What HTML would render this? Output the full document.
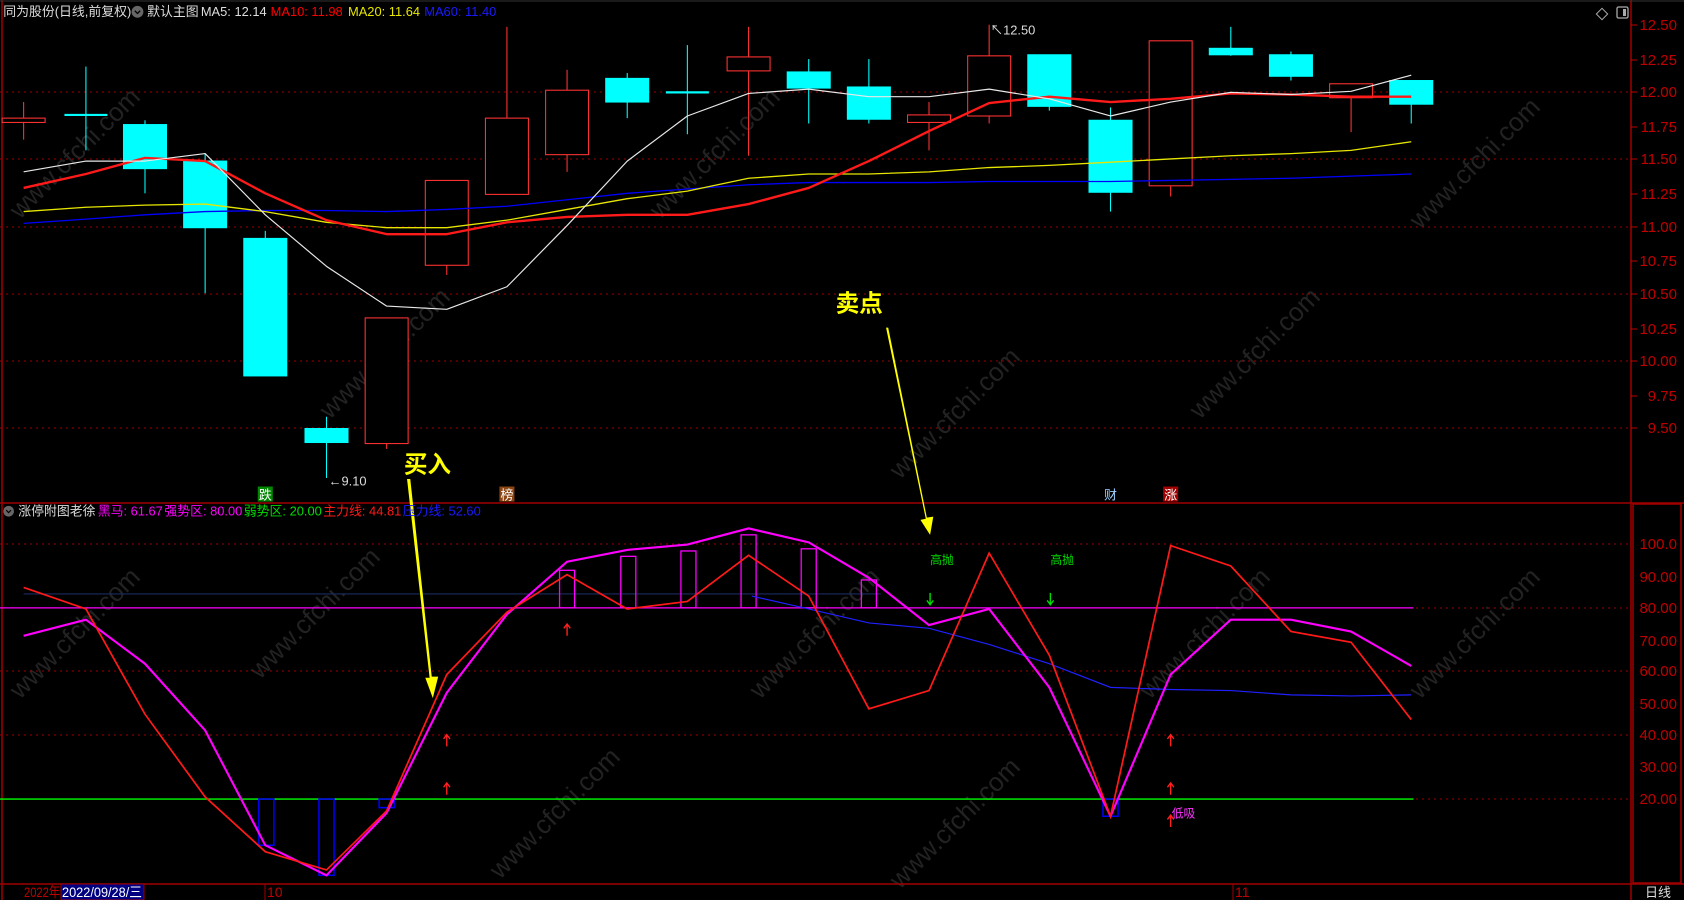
<!DOCTYPE html>
<html><head><meta charset="utf-8"><style>
html,body{margin:0;padding:0;background:#000;overflow:hidden}
svg{display:block}
text{font-family:"Liberation Sans","Noto Sans CJK SC",sans-serif}
</style></head><body>
<svg width="1684" height="900" viewBox="0 0 1684 900" xmlns="http://www.w3.org/2000/svg">
<rect width="1684" height="900" fill="#000"/>
<!-- watermarks -->
<g fill="#222" font-size="26" font-family="Liberation Sans">
<text transform="translate(20,220) rotate(-45)">www.cfchi.com</text>
<text transform="translate(330,420) rotate(-45)">www.cfchi.com</text>
<text transform="translate(660,220) rotate(-45)">www.cfchi.com</text>
<text transform="translate(900,480) rotate(-45)">www.cfchi.com</text>
<text transform="translate(1200,420) rotate(-45)">www.cfchi.com</text>
<text transform="translate(1420,230) rotate(-45)">www.cfchi.com</text>
<text transform="translate(20,700) rotate(-45)">www.cfchi.com</text>
<text transform="translate(260,680) rotate(-45)">www.cfchi.com</text>
<text transform="translate(500,880) rotate(-45)">www.cfchi.com</text>
<text transform="translate(760,700) rotate(-45)">www.cfchi.com</text>
<text transform="translate(900,890) rotate(-45)">www.cfchi.com</text>
<text transform="translate(1150,700) rotate(-45)">www.cfchi.com</text>
<text transform="translate(1420,700) rotate(-45)">www.cfchi.com</text>
</g>
<!-- grid dotted -->
<g stroke="#a00000" stroke-width="1" stroke-dasharray="2,4">
<line x1="0" y1="92" x2="1630" y2="92"/><line x1="0" y1="159" x2="1630" y2="159"/>
<line x1="0" y1="227" x2="1630" y2="227"/><line x1="0" y1="294" x2="1630" y2="294"/>
<line x1="0" y1="361" x2="1630" y2="361"/><line x1="0" y1="428" x2="1630" y2="428"/>
<line x1="0" y1="544" x2="1630" y2="544"/><line x1="0" y1="608" x2="1630" y2="608"/>
<line x1="0" y1="671" x2="1630" y2="671"/><line x1="0" y1="735" x2="1630" y2="735"/>
<line x1="0" y1="799" x2="1630" y2="799"/>
</g>
<!-- frame -->
<g stroke="#a00000" stroke-width="1.5" fill="none">
<line x1="1631" y1="0" x2="1631" y2="900"/>
<line x1="0" y1="503" x2="1684" y2="503"/>
<line x1="0" y1="884" x2="1684" y2="884"/>
<rect x="1633" y="504" width="48" height="379"/>
<line x1="2" y1="0" x2="2" y2="900"/>
</g>
<line x1="0" y1="1" x2="1684" y2="1" stroke="#333" stroke-width="1"/>
<!-- axis ticks/labels -->
<g fill="#c00000" font-size="15" text-anchor="end">
<text x="1677" y="30">12.50</text><text x="1677" y="65">12.25</text><text x="1677" y="97">12.00</text>
<text x="1677" y="132">11.75</text><text x="1677" y="164">11.50</text><text x="1677" y="199">11.25</text>
<text x="1677" y="232">11.00</text><text x="1677" y="266">10.75</text><text x="1677" y="299">10.50</text>
<text x="1677" y="334">10.25</text><text x="1677" y="366">10.00</text><text x="1677" y="401">9.75</text>
<text x="1677" y="433">9.50</text>
<text x="1677" y="549">100.0</text><text x="1677" y="582">90.00</text><text x="1677" y="613">80.00</text>
<text x="1677" y="646">70.00</text><text x="1677" y="676">60.00</text><text x="1677" y="709">50.00</text>
<text x="1677" y="740">40.00</text><text x="1677" y="772">30.00</text><text x="1677" y="804">20.00</text>
</g>
<g stroke="#c00000" stroke-width="1">
<line x1="1631" y1="25" x2="1637" y2="25"/><line x1="1631" y1="60" x2="1637" y2="60"/><line x1="1631" y1="92" x2="1637" y2="92"/>
<line x1="1631" y1="127" x2="1637" y2="127"/><line x1="1631" y1="159" x2="1637" y2="159"/><line x1="1631" y1="194" x2="1637" y2="194"/>
<line x1="1631" y1="227" x2="1637" y2="227"/><line x1="1631" y1="261" x2="1637" y2="261"/><line x1="1631" y1="294" x2="1637" y2="294"/>
<line x1="1631" y1="329" x2="1637" y2="329"/><line x1="1631" y1="361" x2="1637" y2="361"/><line x1="1631" y1="396" x2="1637" y2="396"/>
<line x1="1631" y1="428" x2="1637" y2="428"/>
</g>
<!-- icons top right -->
<rect x="1598" y="10" width="8" height="8" fill="none" stroke="#aaa" transform="rotate(45 1602 14)"/>
<rect x="1617" y="7" width="11" height="11" rx="1.5" fill="none" stroke="#aaa" stroke-width="1.3"/><rect x="1623" y="9" width="3" height="7" fill="#aaa"/>

<!-- main chart in visual coords -->
<g transform="scale(1.074)">
<g stroke-width="1">
<g stroke="#ff3232" fill="#000">
<line x1="22" y1="95" x2="22" y2="130"/><rect x="2" y="110" width="40" height="4"/>
<line x1="360" y1="296" x2="360" y2="418"/><rect x="340" y="296" width="40" height="117"/>
<line x1="416" y1="168" x2="416" y2="256"/><rect x="396" y="168" width="40" height="79"/>
<line x1="472" y1="25" x2="472" y2="181"/><rect x="452" y="110" width="40" height="71"/>
<line x1="528" y1="65" x2="528" y2="160"/><rect x="508" y="84" width="40" height="60"/>
<line x1="697" y1="25" x2="697" y2="145"/><rect x="677" y="53" width="40" height="13"/>
<line x1="865" y1="95" x2="865" y2="140"/><rect x="845" y="107" width="40" height="7"/>
<line x1="921" y1="23" x2="921" y2="115"/><rect x="901" y="52" width="40" height="56"/>
<line x1="1090" y1="38" x2="1090" y2="183"/><rect x="1070" y="38" width="40" height="135"/>
<line x1="1258" y1="78" x2="1258" y2="123"/><rect x="1238" y="78" width="40" height="13"/>
</g>
<g stroke="#00ffff" fill="#00ffff">
<line x1="80" y1="62" x2="80" y2="140"/><line x1="60" y1="107" x2="100" y2="107" stroke-width="2"/>
<line x1="135" y1="112" x2="135" y2="180"/><rect x="115" y="116" width="40" height="41"/>
<line x1="191" y1="143" x2="191" y2="273"/><rect x="171" y="150" width="40" height="62"/>
<line x1="247" y1="215" x2="247" y2="350"/><rect x="227" y="222" width="40" height="128"/>
<line x1="304" y1="388" x2="304" y2="445"/><rect x="284" y="399" width="40" height="13"/>
<line x1="584" y1="68" x2="584" y2="110"/><rect x="564" y="73" width="40" height="22"/>
<line x1="640" y1="42" x2="640" y2="125"/><line x1="620" y1="86" x2="660" y2="86" stroke-width="2"/>
<line x1="753" y1="55" x2="753" y2="115"/><rect x="733" y="67" width="40" height="15"/>
<line x1="809" y1="55" x2="809" y2="115"/><rect x="789" y="81" width="40" height="30"/>
<line x1="977" y1="51" x2="977" y2="103"/><rect x="957" y="51" width="40" height="48"/>
<line x1="1034" y1="100" x2="1034" y2="197"/><rect x="1014" y="112" width="40" height="67"/>
<line x1="1146" y1="25" x2="1146" y2="52"/><rect x="1126" y="45" width="40" height="6"/>
<line x1="1202" y1="48" x2="1202" y2="75"/><rect x="1182" y="51" width="40" height="20"/>
<line x1="1314" y1="75" x2="1314" y2="115"/><rect x="1294" y="75" width="40" height="22"/>
</g>
</g>
<g fill="none" stroke-linejoin="round">
<polyline stroke="#0000ff" stroke-width="1.2" points="22,208 80,204 135,200 191,197 247,196 304,196 360,197 416,195 472,192 528,186 584,180 640,176 697,172 753,170 809,170 865,170 921,169 977,169 1034,169 1090,168 1146,167 1202,166 1258,164 1314,162"/>
<polyline stroke="#e6e600" stroke-width="1.2" points="22,197 80,193 135,191 191,190 247,197 304,207 360,212 416,212 472,205 528,195 584,185 640,178 697,166 753,162 809,162 865,160 921,156 977,154 1034,151 1090,148 1146,145 1202,143 1258,140 1314,132"/>
<polyline stroke="#ff1a1a" stroke-width="2.2" points="22,175 80,162 135,147 191,150 247,180 304,205 360,218 416,218 472,207 528,202 584,200 640,200 697,190 753,175 809,150 865,122 921,96 977,90 1034,95 1090,92 1146,87 1202,88 1258,90 1314,90"/>
<polyline stroke="#e8e8e8" stroke-width="1.1" points="22,160 80,150 135,150 191,143 247,200 304,248 360,285 416,288 472,267 528,210 584,150 640,108 697,87 753,83 809,90 865,90 921,83 977,92 1034,108 1090,95 1146,86 1202,88 1258,85 1314,70"/>
</g>
<text x="306" y="452" fill="#ddd" font-size="12">←9.10</text>
<text x="922" y="32" fill="#ddd" font-size="12">↖12.50</text>
<rect x="240" y="453" width="14" height="14" fill="#008800"/><text x="241" y="465" fill="#fff" font-size="12">跌</text>
<rect x="465" y="453" width="14" height="14" fill="#8b4513"/><text x="466" y="465" fill="#fff" font-size="12">榜</text>
<text x="1028" y="465" fill="#9fd0ff" font-size="12">财</text>
<rect x="1083" y="453" width="14" height="14" fill="#a00000"/><text x="1084" y="465" fill="#fff" font-size="12">涨</text>

<line x1="22" y1="553" x2="820" y2="553" stroke="#1a2a60" stroke-width="1"/>
<line x1="0" y1="566" x2="1316" y2="566" stroke="#ff00ff" stroke-width="1.2"/>
<line x1="0" y1="744" x2="1316" y2="744" stroke="#00ff00" stroke-width="1.2"/>
<g fill="none" stroke="#ff00ff" stroke-width="1.2">
<rect x="521" y="531" width="14" height="35"/><rect x="578" y="518" width="14" height="48"/>
<rect x="634" y="513" width="14" height="53"/><rect x="690" y="498" width="14" height="68"/>
<rect x="746" y="511" width="14" height="55"/><rect x="802" y="540" width="14" height="26"/>
</g>
<g fill="none" stroke="#0000ff" stroke-width="1.4">
<rect x="241" y="744" width="14" height="43"/><rect x="297" y="744" width="14" height="71"/>
<rect x="353" y="744" width="14" height="8"/><rect x="1027" y="744" width="14" height="16"/>
</g>
<polyline fill="none" stroke="#2020ff" stroke-width="1.1" points="700,555 753,567 809,580 865,585 921,600 977,618 1034,640 1090,642 1146,643 1202,647 1258,648 1314,647"/>
<polyline fill="none" stroke="#ff00ff" stroke-width="2" points="22,592 80,577 135,618 191,680 247,787 304,815 360,757 416,645 472,572 528,523 584,512 640,507 697,492 753,505 809,538 865,582 921,567 977,640 1034,760 1090,628 1146,577 1202,577 1258,588 1314,620"/>
<polyline fill="none" stroke="#ff1a1a" stroke-width="1.6" points="22,547 80,567 135,665 191,742 247,793 304,810 360,755 416,628 472,570 528,535 584,567 640,560 697,517 753,555 809,660 865,643 921,515 977,610 1034,760 1090,508 1146,527 1202,588 1258,598 1314,670"/>
<g stroke="#ff2020" stroke-width="1.3" fill="none">
<path d="M528,592 V582 M525,585 L528,581 L531,585"/>
<path d="M416,695 V685 M413,688 L416,684 L419,688"/>
<path d="M416,740 V730 M413,733 L416,729 L419,733"/>
<path d="M1090,695 V685 M1087,688 L1090,684 L1093,688"/>
<path d="M1090,740 V730 M1087,733 L1090,729 L1093,733"/>
<path d="M1090,770 V760 M1087,763 L1090,759 L1093,763"/>
</g>
<g stroke="#00dd00" stroke-width="1.3" fill="none">
<path d="M866,552 V562 M863,559 L866,563 L869,559"/>
<path d="M978,552 V562 M975,559 L978,563 L981,559"/>
</g>
<text x="866" y="525" fill="#00dd00" font-size="11">高抛</text>
<text x="978" y="525" fill="#00dd00" font-size="11">高抛</text>
<text x="1091" y="761" fill="#ff33ff" font-size="11">低吸</text>
<text x="778" y="290" fill="#ffff00" font-size="22" font-weight="bold">卖点</text>
<polygon fill="#ffff00" points="825,305 827,305 863,482 869,481 866,498 857,484 862,483"/>
<text x="376" y="440" fill="#ffff00" font-size="22" font-weight="bold">买入</text>
<polygon fill="#ffff00" points="379,446 382,446 402,630 408,630 403,650 396,631 400,631"/>
<text x="3" y="15" fill="#ddd" font-size="12">同为股份(日线,前复权)</text>
<circle cx="128" cy="11" r="5.5" fill="#666"/><path d="M125.5,10 L128,12.5 L130.5,10" stroke="#000" stroke-width="1.2" fill="none"/>
<text x="137" y="15" fill="#ddd" font-size="12">默认主图</text>
<text x="187" y="15" fill="#ddd" font-size="12">MA5: 12.14</text>
<text x="252" y="15" fill="#ff0000" font-size="12">MA10: 11.98</text>
<text x="324" y="15" fill="#e6e600" font-size="12">MA20: 11.64</text>
<text x="395" y="15" fill="#1a1aff" font-size="12">MA60: 11.40</text>
<circle cx="8" cy="476" r="5" fill="#666"/><path d="M5.8,475 L8,477.3 L10.2,475" stroke="#000" stroke-width="1.1" fill="none"/>
<text x="17" y="480" fill="#ddd" font-size="12">涨停附图老徐</text>
<text x="91" y="480" fill="#ff00ff" font-size="12">黑马: 61.67</text>
<text x="153" y="480" fill="#ff00ff" font-size="12">强势区: 80.00</text>
<text x="227" y="480" fill="#00dd00" font-size="12">弱势区: 20.00</text>
<text x="301" y="480" fill="#ff1a1a" font-size="12">主力线: 44.81</text>
<text x="375" y="480" fill="#1a1aff" font-size="12">压力线: 52.60</text>
</g>
<!-- date bar -->
<text x="24" y="897" fill="#c00000" font-size="14" textLength="36" lengthAdjust="spacingAndGlyphs">2022年</text>
<rect x="61" y="884" width="83" height="16" fill="#000080" stroke="#a00000"/>
<text x="62" y="897" fill="#fff" font-size="14" textLength="80" lengthAdjust="spacingAndGlyphs">2022/09/28/三</text>
<line x1="265" y1="884" x2="265" y2="900" stroke="#a00000"/>
<text x="267" y="897" fill="#c00000" font-size="14">10</text>
<line x1="1233" y1="884" x2="1233" y2="900" stroke="#a00000"/>
<text x="1235" y="897" fill="#c00000" font-size="14">11</text>
<text x="1645" y="897" fill="#ddd" font-size="13">日线</text>
</svg>
</body></html>
